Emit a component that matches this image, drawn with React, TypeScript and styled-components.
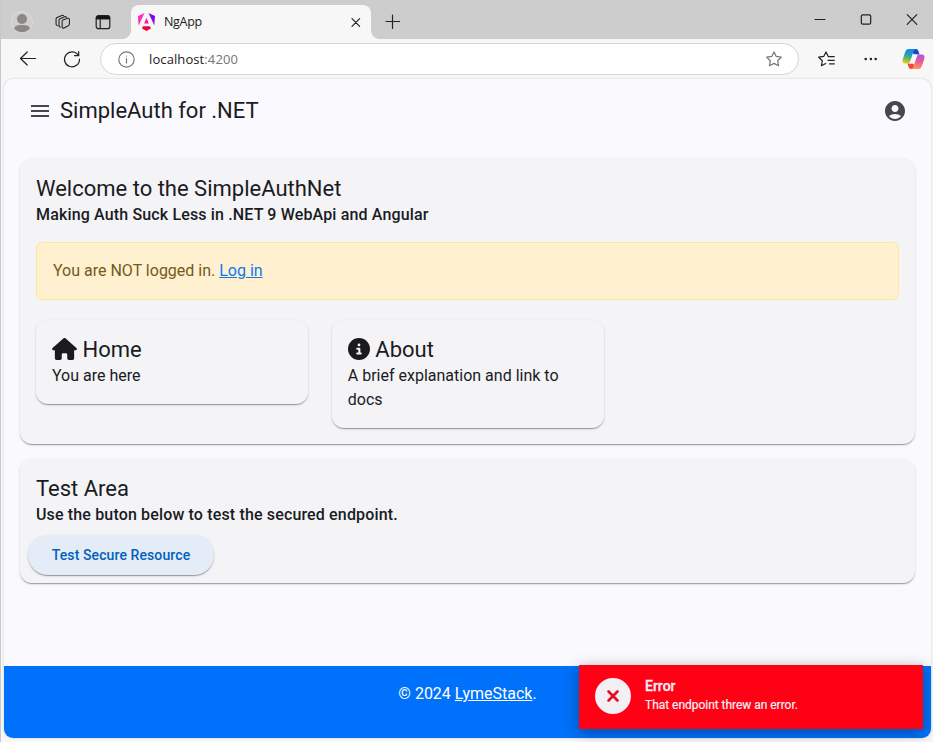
import React from "react";
import styled, { createGlobalStyle, css } from "styled-components";
import { FaHouse, FaCircleInfo } from "react-icons/fa6";
import { MdMenu, MdAccountCircle } from "react-icons/md";

const GlobalStyle = createGlobalStyle`
  *, *::before, *::after { box-sizing: border-box; }
  body { margin: 0; background: #f7f7f7; }
  svg { display: block; flex: none; }
`;

const BrowserWindow = styled.div`
  display: flex;
  flex-direction: column;
  width: 933px;
  height: 742px;
  overflow: hidden;
  background: #f7f7f7;
  border-left: 1px solid #c9c9c9;
  font-family: "Open Sans", "Noto Sans", sans-serif;
`;

const TabStrip = styled.div`
  display: flex;
  height: 39px;
  background: #cdcdcd;
`;

const StripTools = styled.div`
  display: flex;
  align-items: center;
  gap: 23px;
  width: 130px;
  padding: 5px 0 0 10px;

  svg + svg {
    margin-left: -1px;
  }
  svg:last-child {
    margin-left: 1px;
  }
`;

const Tab = styled.div`
  position: relative;
  display: flex;
  align-items: center;
  width: 240px;
  height: 34px;
  margin-top: 5px;
  padding: 0 10px 0 7px;
  border-radius: 8px 8px 0 0;
  background: #f7f7f7;

  &::before,
  &::after {
    content: "";
    position: absolute;
    bottom: 0;
    width: 8px;
    height: 8px;
  }
  &::before {
    left: -8px;
    background: radial-gradient(circle at 0 0, transparent 7.5px, #f7f7f7 8px);
  }
  &::after {
    right: -8px;
    background: radial-gradient(circle at 100% 0, transparent 7.5px, #f7f7f7 8px);
  }
`;

const TabTitle = styled.span`
  flex: 1;
  margin-left: 9px;
  font-size: 12.5px;
  line-height: 18px;
  letter-spacing: -0.3px;
  color: #1b1b1b;
`;

const NewTab = styled.div`
  padding: 14px 0 0 14px;
`;

const WindowControls = styled.div`
  display: flex;
  gap: 34px;
  margin-left: auto;
  padding: 13px 15px 0 0;
`;

const Toolbar = styled.div`
  display: flex;
  align-items: center;
  height: 40px;
  padding: 0 8px 0 17px;
`;

const NavButtons = styled.div`
  display: flex;
  align-items: center;
  gap: 24px;
  width: 82px;
`;

const AddressBar = styled.div`
  display: flex;
  align-items: center;
  width: 699px;
  height: 32px;
  padding: 0 16px 0 17px;
  border: 1px solid #d6d6d6;
  border-radius: 16px;
  background: #fff;
`;

const Address = styled.span`
  flex: 1;
  margin-left: 14px;
  font-size: 13px;
  line-height: 20px;
  letter-spacing: 0.1px;
  color: #1b1b1b;
`;

const Port = styled.span`
  color: #757575;
`;

const BrowserActions = styled.div`
  display: flex;
  flex: 1;
  align-items: center;
  justify-content: space-between;
  margin-left: 19px;
`;

const Viewport = styled.div`
  position: relative;
  display: flex;
  flex-direction: column;
  width: 927px;
  height: 659px;
  margin-left: 3px;
  border-radius: 9px;
  background: #faf9fd;
  color: #1a1b1f;
  font-family: Roboto, sans-serif;
  box-shadow: 0 0 2px rgba(0, 0, 0, 0.22);
`;

const AppBar = styled.header`
  display: flex;
  align-items: center;
  height: 64px;
  padding: 0 24px;
`;

const AppTitle = styled.h1`
  flex: 1;
  margin: 0 0 0 8px;
  font-size: 22px;
  font-weight: 400;
  line-height: 28px;
`;

const Main = styled.main`
  display: flex;
  flex: 1;
  flex-direction: column;
  gap: 15px;
  padding: 16px 16px 0 16px;
`;

const cardSurface = css`
  border-radius: 12px;
  background: #f4f3f6;
  box-shadow: 0 2px 1px -1px rgba(0, 0, 0, 0.2), 0 1px 1px 0 rgba(0, 0, 0, 0.14),
    0 1px 3px 0 rgba(0, 0, 0, 0.12);
`;

const Panel = styled.section<{ $height: number }>`
  ${cardSurface}
  height: ${(p) => p.$height}px;
  padding: 16px;
`;

const Heading = styled.h2`
  display: flex;
  align-items: center;
  gap: 5.5px;
  margin: 0;
  font-size: 22px;
  font-weight: 400;
  line-height: 28px;

  svg {
    margin-top: -2px;
  }
`;

const HouseIcon = styled(FaHouse)`
  width: 25px;
  height: 22px;
`;

const Subtitle = styled.p`
  margin: 0;
  font-size: 16px;
  font-weight: 500;
  line-height: 24px;
  letter-spacing: 0.15px;
`;

const Alert = styled.div`
  margin-top: 15px;
  padding: 16px;
  border: 1px solid #ffe69c;
  border-radius: 6px;
  background: #fff0cf;
  color: #74591a;
  font-size: 16px;
  line-height: 24px;
`;

const Link = styled.a`
  color: #0d78f5;
  text-decoration: underline;
`;

const Tiles = styled.div`
  display: flex;
  align-items: flex-start;
  gap: 24px;
  margin-top: 20px;
`;

const Tile = styled.article`
  ${cardSurface}
  width: 271.8px;
  padding: 16px;
`;

const TileText = styled.p`
  margin: 0;
  font-size: 16px;
  line-height: 24px;
`;

const ActionButton = styled.button`
  height: 40px;
  width: 186px;
  margin: 8px 0 0 -8px;
  padding: 0;
  border: 0;
  border-radius: 20px;
  background: #e4ecf7;
  color: #0062bb;
  font-family: inherit;
  font-size: 14px;
  font-weight: 500;
  letter-spacing: 0.1px;
  box-shadow: 0 2px 1px -1px rgba(0, 0, 0, 0.2), 0 1px 1px 0 rgba(0, 0, 0, 0.14),
    0 1px 3px 0 rgba(0, 0, 0, 0.12);
`;

const Footer = styled.footer`
  height: 72px;
  padding-top: 16px;
  border-radius: 0 0 9px 9px;
  background: #0071fa;
  color: #fff;
  font-size: 16px;
  line-height: 24px;
  text-align: center;
`;

const FooterLink = styled.a`
  color: inherit;
  text-decoration: underline;
`;

const Toast = styled.div`
  position: absolute;
  right: 8px;
  bottom: 9px;
  display: flex;
  align-items: center;
  gap: 14px;
  width: 344px;
  height: 64px;
  padding: 0 16px 3px;
  background: #ff0015;
  color: #f4eff4;
  box-shadow: 0 3px 14px rgba(0, 0, 0, 0.35);
`;

const ToastBadge = styled.div`
  display: grid;
  place-items: center;
  width: 36px;
  height: 36px;
  border-radius: 50%;
  background: #f2eff5;
`;

const ToastTitle = styled.div`
  font-size: 14px;
  font-weight: 500;
  line-height: 20px;
  -webkit-text-stroke: 0.3px currentColor;
`;

const ToastText = styled.div`
  font-size: 12px;
  line-height: 19px;
  letter-spacing: -0.03px;
  -webkit-text-stroke: 0.2px currentColor;
`;

const LineSvg = styled.svg<{ $muted?: boolean }>`
  fill: none;
  stroke: ${(p) => (p.$muted ? "#777" : "#222")};
  stroke-width: 1.2;
  stroke-linecap: round;
  stroke-linejoin: round;
`;

const AngularLogo = () => (
  <svg width="17" height="18" viewBox="0 0 223 236">
    <defs>
      <linearGradient id="ng" x1="20" y1="190" x2="210" y2="50" gradientUnits="userSpaceOnUse">
        <stop offset="0" stopColor="#e40035" />
        <stop offset=".25" stopColor="#f60a48" />
        <stop offset=".45" stopColor="#f20aa5" />
        <stop offset=".7" stopColor="#b014e0" />
        <stop offset="1" stopColor="#6c00f5" />
      </linearGradient>
      <linearGradient id="ngp" x1="20" y1="20" x2="170" y2="200" gradientUnits="userSpaceOnUse">
        <stop offset="0" stopColor="#ff31d9" />
        <stop offset="1" stopColor="#ff005c" />
      </linearGradient>
    </defs>
    <path fill="url(#ng)" d="m222.077 39.192-8.019 125.923L137.387 0l84.69 39.192Z" />
    <path
      fill="url(#ngp)"
      d="M111.039 62.675l30.357 73.803H80.681l30.358-73.803ZM7.937 165.115 0 39.192 84.69 0 7.937 165.115Z"
    />
    <path fill="#f5003f" d="M53.105 202.017l57.934 33.056 57.933-33.056-11.783-28.556H64.888Z" />
  </svg>
);

const CopilotLogo = () => (
  <svg width="23" height="22" viewBox="0 0 23 22">
    <defs>
      <linearGradient id="cpA" x1=".6" y1="0" x2=".4" y2="1">
        <stop offset="0" stopColor="#1688e4" />
        <stop offset=".35" stopColor="#159bc8" />
        <stop offset=".65" stopColor="#5bb75c" />
        <stop offset="1" stopColor="#f0ca20" />
      </linearGradient>
      <linearGradient id="cpB" x1=".6" y1="0" x2=".4" y2="1">
        <stop offset="0" stopColor="#a65be8" />
        <stop offset=".45" stopColor="#ee5593" />
        <stop offset="1" stopColor="#ff9a55" />
      </linearGradient>
    </defs>
    <path fill="#1749c4" d="M10 1h3.700c1.500 0 2.400.8 2.800 2.200l1 3.300h-4c-1.200 0-2-.3-2.500-1.500Z" />
    <path fill="#ef4a35" d="M13 21H9.300c-1.500 0-2.400-.8-2.800-2.200l-1-3.300h4c1.200 0 2 .3 2.500 1.500Z" />
    <path
      fill="url(#cpA)"
      d="M6.500 1h7.300c-1.300.3-1.900 1.200-2.300 2.600L8.300 13c-.6 1.700-1.400 2.500-3 2.500H3.200c-2.300 0-3.200-1.700-2.500-4.200L3.200 4C3.800 2 4.900 1 6.500 1Z"
    />
    <path
      fill="url(#cpB)"
      d="M16.500 21H9.200c1.300-.3 1.900-1.200 2.300-2.600L14.700 9c.6-1.700 1.400-2.500 3-2.500h2.100c2.300 0 3.200 1.700 2.500 4.200L19.800 18c-.6 2-1.700 3-3.300 3Z"
    />
    <path fill="#fbf8f7" d="M12.400 6.500h2.500c-.8.500-1.100 1.300-1.400 2.200l-1.600 4.700c-.5 1.400-1.200 2.100-2.600 2.100H7.400c.8-.5 1.200-1.300 1.500-2.200l1.500-4.700c.4-1.200.9-1.900 2-2.100Z" />
  </svg>
);

const STAR = "M8 .9l2.250 4.550 5 .75-3.600 3.500.85 5-4.500-2.350-4.500 2.350.85-5L.75 6.200l5-.75z";

export default function App() {
  return (
    <>
      <GlobalStyle />
      <BrowserWindow>
        <TabStrip>
          <StripTools>
            <svg width="22" height="22" viewBox="0 0 22 22">
              <circle cx="11" cy="11" r="10.500" fill="#d0cdca" stroke="#dedbd8" />
              <circle cx="11" cy="8" r="5" fill="#8b8785" />
              <path d="M3 17.500c1-3 4-3.500 8-3.500s7 .5 8 3.500a10.300 10.300 0 0 1-16 0Z" fill="#8b8785" />
            </svg>
            <LineSvg width="16" height="17" viewBox="0 0 18 18">
              <path d="M8.700 6.300 14.300 4.300q1.700-.5 1.900 1.100v5.400q0 1.300-1.200 1.800l-4.900 2.500q-1.800.8-2.100-.9V8.100q0-1.300.7-1.800Z" />
              <path d="M6 14q-1.400.1-1.500-1.200V6.700q0-1.400 1.200-1.900l5.200-2.300q1.400-.5 2 .6" />
              <path d="M2.800 12.300q-1.500 0-1.600-1.300V5.100q0-1.300 1.100-1.800L7.700 1q1.200-.4 2 .3" />
            </LineSvg>
            <LineSvg width="16" height="16" viewBox="0 0 16 16">
              <rect x="1.200" y="1.700" width="13.600" height="13" rx="2.300" />
              <path fill="#111" d="M1.500 5V3.500q0-1.500 1.700-1.500h9.600q1.700 0 1.700 1.500V5Z" />
              <path d="M5.200 5v9.500" />
            </LineSvg>
          </StripTools>
          <Tab>
            <AngularLogo />
            <TabTitle>NgApp</TabTitle>
            <LineSvg width="10" height="10" viewBox="0 0 10 10">
              <path d="m1 1.700 7.600 7.600M8.600 1.700 1 9.300" />
            </LineSvg>
          </Tab>
          <NewTab>
            <LineSvg width="16" height="16" viewBox="0 0 16 16">
              <path d="M7.500 1v13.500M1 7.500h13.500" />
            </LineSvg>
          </NewTab>
          <WindowControls>
            <LineSvg width="12" height="13" viewBox="0 0 12 13">
              <path d="M1 6.500h10" />
            </LineSvg>
            <LineSvg width="12" height="13" viewBox="0 0 12 13">
              <rect x="1.300" y="1.800" width="9.400" height="9.400" rx="1.500" />
            </LineSvg>
            <LineSvg width="12" height="13" viewBox="0 0 12 13">
              <path d="m1.200 1.700 9.600 9.600M10.800 1.700l-9.600 9.600" />
            </LineSvg>
          </WindowControls>
        </TabStrip>
        <Toolbar>
          <NavButtons>
            <LineSvg width="20" height="20" viewBox="0 0 20 20">
              <path d="M17.500 9.500H2.700M9.200 3 2.500 9.500l6.700 6.500" />
            </LineSvg>
            <LineSvg width="20" height="20" viewBox="0 0 20 20">
              <path d="M16.500 6.600A7.500 7.500 0 1 0 17.500 10M16.700 2.500v4.200h-4.200" />
            </LineSvg>
          </NavButtons>
          <AddressBar>
            <LineSvg $muted width="17" height="17" viewBox="0 0 17 17">
              <circle cx="8.500" cy="8.500" r="7.700" />
              <path d="M8.500 7.500v4.500M8.500 5v.1" />
            </LineSvg>
            <Address>
              localhost<Port>:4200</Port>
            </Address>
            <LineSvg $muted width="16" height="16" viewBox="0 0 16 16">
              <path d={STAR} />
            </LineSvg>
          </AddressBar>
          <BrowserActions>
            <LineSvg width="17" height="16" viewBox="0 0 17 16">
              <path d="M10.300 5.600 8 .9 5.700 5.450l-5 .75 3.600 3.500-.85 5 4.300-2.250M10.300 5.600h6M10 9.300h6.300M11.500 12.800h4.800" />
            </LineSvg>
            <svg width="16" height="4" viewBox="0 0 16 4" fill="#222">
              <circle cx="4.700" cy="2" r="1.300" />
              <circle cx="9.900" cy="2" r="1.300" />
              <circle cx="14.700" cy="2" r="1.300" />
            </svg>
            <CopilotLogo />
          </BrowserActions>
        </Toolbar>
        <Viewport>
          <AppBar>
            <MdMenu size={24} color="#44474e" />
            <AppTitle>SimpleAuth for .NET</AppTitle>
            <MdAccountCircle size={24} color="#44474e" />
          </AppBar>
          <Main>
            <Panel $height={285}>
              <Heading>Welcome to the SimpleAuthNet</Heading>
              <Subtitle>Making Auth Suck Less in .NET 9 WebApi and Angular</Subtitle>
              <Alert>
                You are NOT logged in. <Link>Log in</Link>
              </Alert>
              <Tiles>
                <Tile>
                  <Heading>
                    <HouseIcon />
                    Home
                  </Heading>
                  <TileText>You are here</TileText>
                </Tile>
                <Tile>
                  <Heading>
                    <FaCircleInfo size={22} />
                    About
                  </Heading>
                  <TileText>A brief explanation and link to docs</TileText>
                </Tile>
              </Tiles>
            </Panel>
            <Panel $height={124}>
              <Heading>Test Area</Heading>
              <Subtitle>Use the buton below to test the secured endpoint.</Subtitle>
              <ActionButton>Test Secure Resource</ActionButton>
            </Panel>
          </Main>
          <Footer>
            © 2024 <FooterLink>LymeStack</FooterLink>.
          </Footer>
          <Toast>
            <ToastBadge>
              <svg width="14" height="14" viewBox="0 0 14 14" stroke="#e80a22" strokeWidth="2.600" strokeLinecap="round">
                <path d="m2.500 2.500 9 9M11.500 2.500l-9 9" />
              </svg>
            </ToastBadge>
            <div>
              <ToastTitle>Error</ToastTitle>
              <ToastText>That endpoint threw an error.</ToastText>
            </div>
          </Toast>
        </Viewport>
      </BrowserWindow>
    </>
  );
}
